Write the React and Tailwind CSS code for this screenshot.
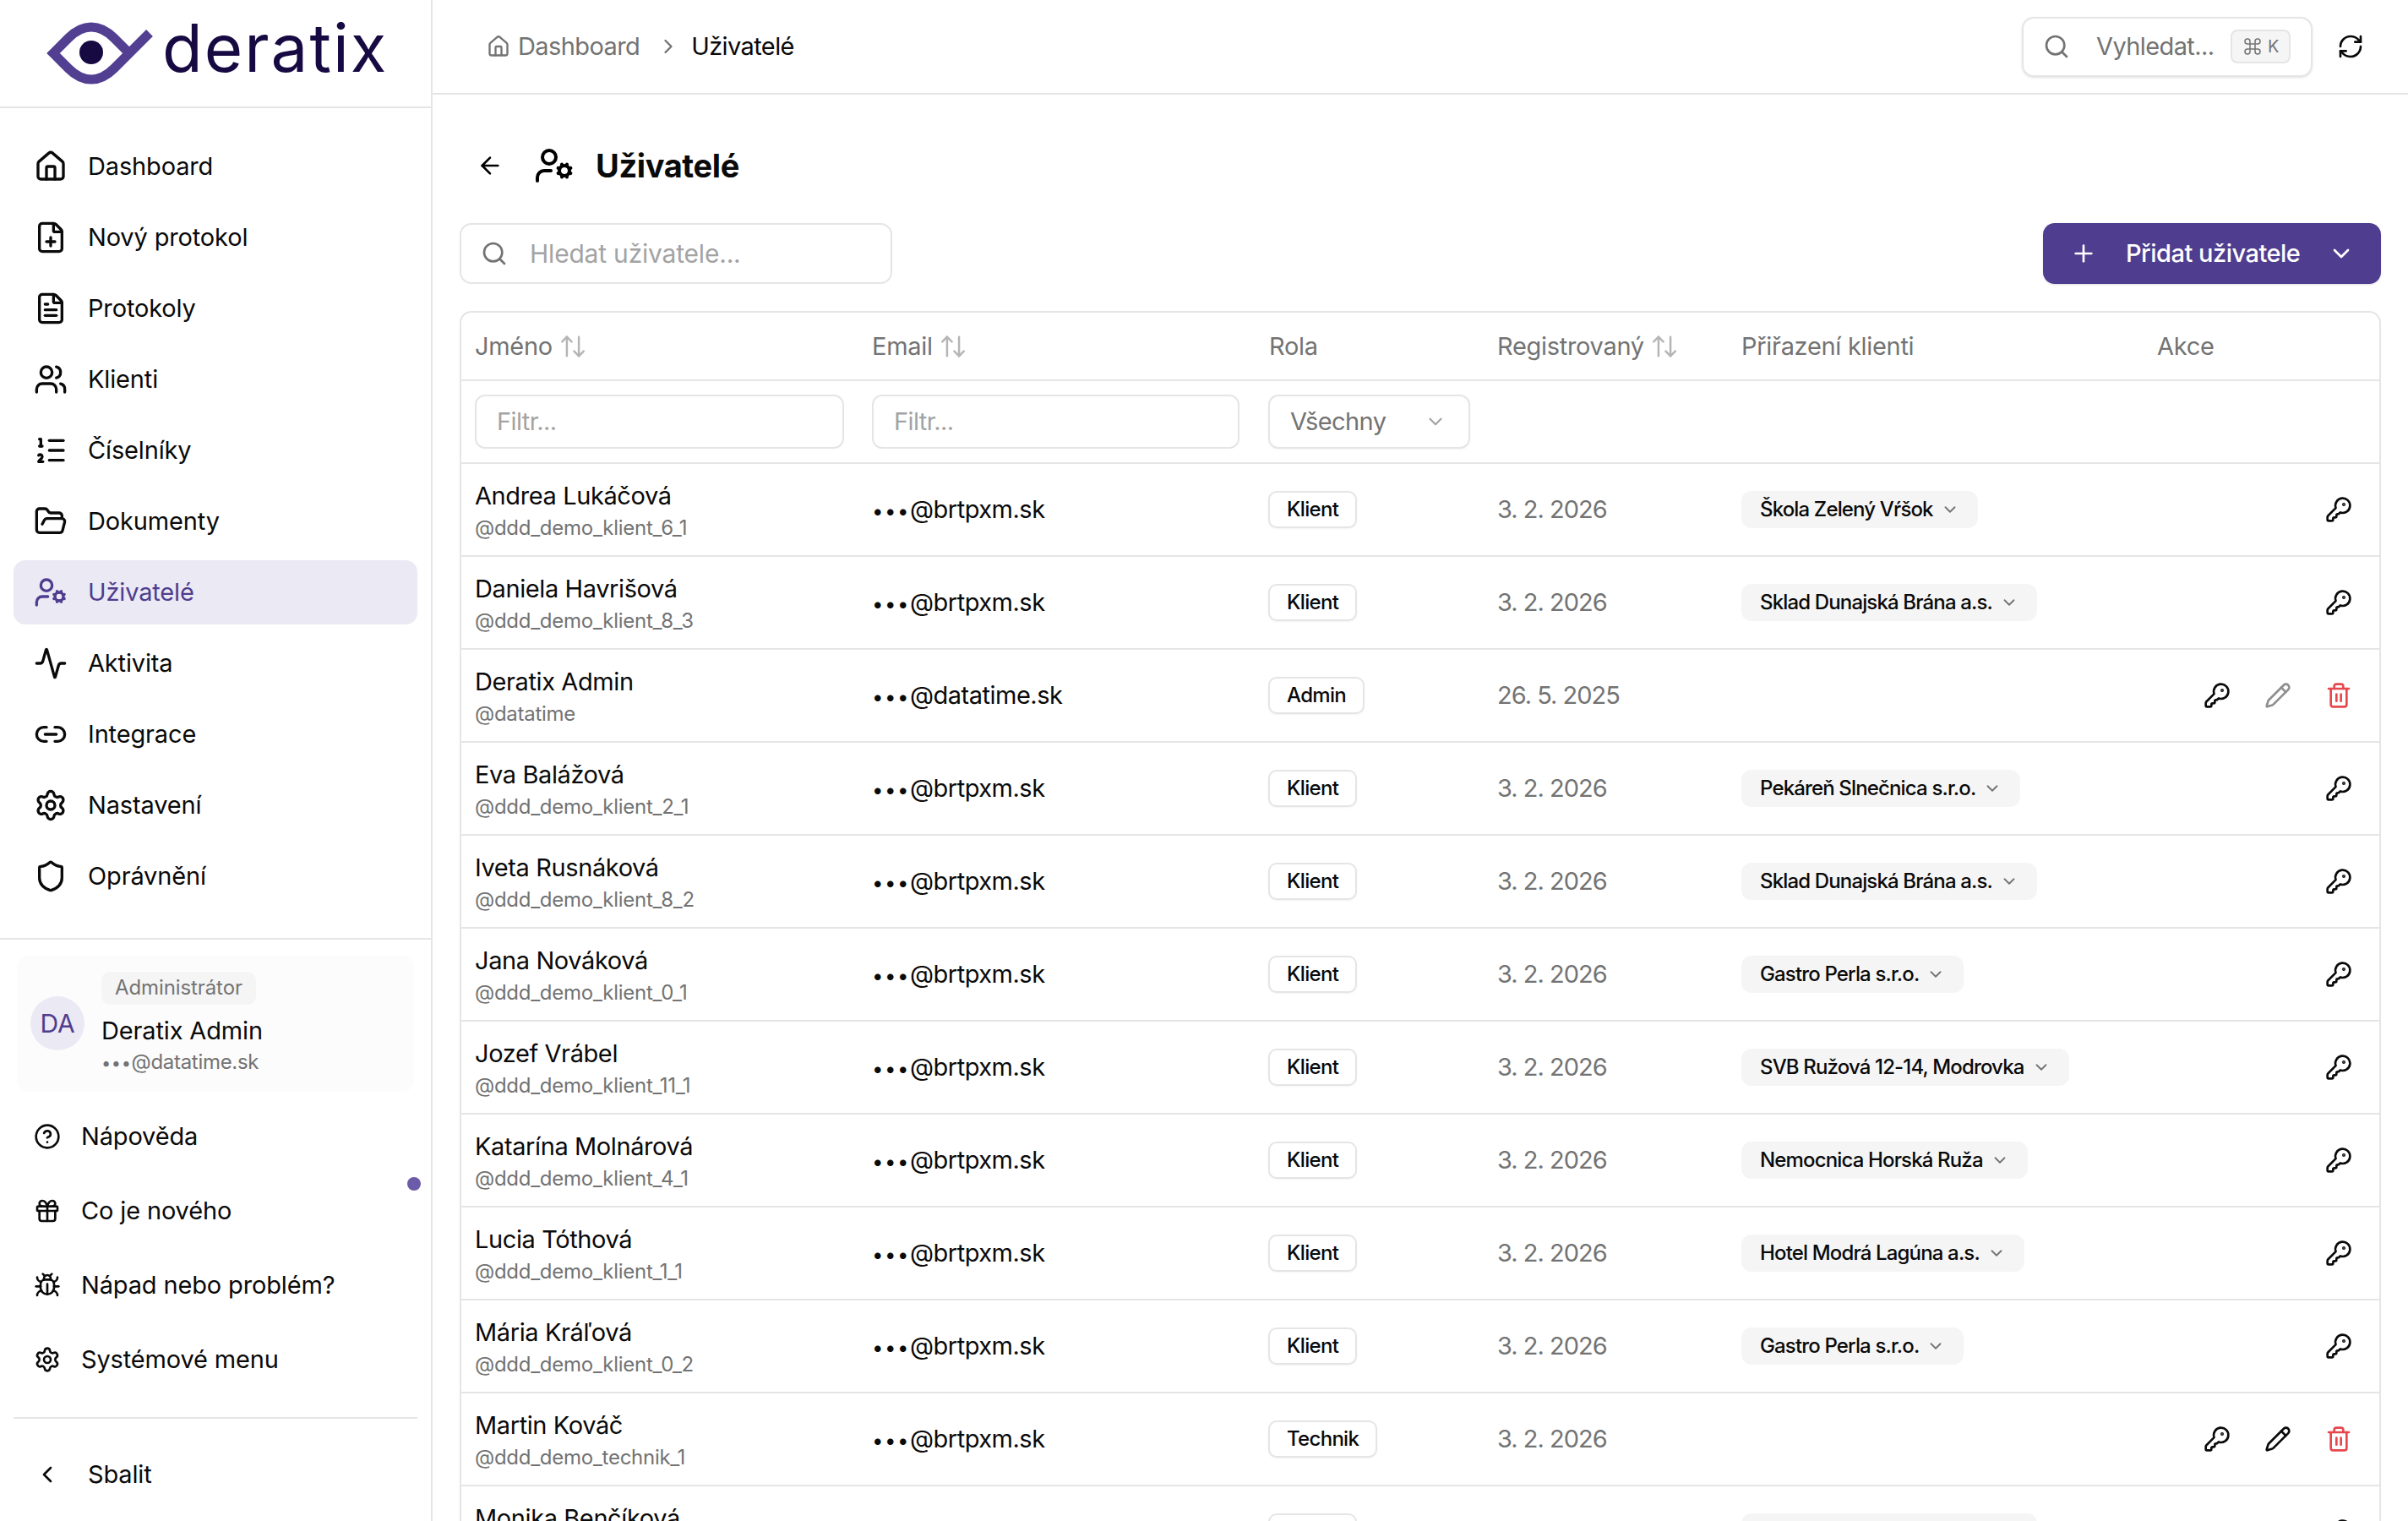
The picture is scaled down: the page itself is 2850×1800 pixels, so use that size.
import React from "react";
import {
  House, FilePlus, FileText, Users, ListOrdered, FolderOpen, UserCog, Activity, Link2, Settings, Shield,
  CircleHelp, Gift, Bug, ChevronLeft, ChevronRight, ChevronDown, Search, RefreshCw, Command, ArrowLeft,
  ArrowUpDown, KeyRound, Pencil, Trash2, Plus,
} from "lucide-react";

const nav = [
  [House, "Dashboard"], [FilePlus, "Nový protokol"], [FileText, "Protokoly"], [Users, "Klienti"],
  [ListOrdered, "Číselníky"], [FolderOpen, "Dokumenty"], [UserCog, "Uživatelé", true], [Activity, "Aktivita"],
  [Link2, "Integrace"], [Settings, "Nastavení"], [Shield, "Oprávnění"],
];
const bottom = [[CircleHelp, "Nápověda"], [Gift, "Co je nového", false, true], [Bug, "Nápad nebo problém?"], [Settings, "Systémové menu"]];

const rows = [
  ["Andrea Lukáčová", "@ddd_demo_klient_6_1", "brtpxm.sk", "Klient", "3. 2. 2026", "Škola Zelený Vŕšok"],
  ["Daniela Havrišová", "@ddd_demo_klient_8_3", "brtpxm.sk", "Klient", "3. 2. 2026", "Sklad Dunajská Brána a.s."],
  ["Deratix Admin", "@datatime", "datatime.sk", "Admin", "26. 5. 2025", null, "disabled"],
  ["Eva Balážová", "@ddd_demo_klient_2_1", "brtpxm.sk", "Klient", "3. 2. 2026", "Pekáreň Slnečnica s.r.o."],
  ["Iveta Rusnáková", "@ddd_demo_klient_8_2", "brtpxm.sk", "Klient", "3. 2. 2026", "Sklad Dunajská Brána a.s."],
  ["Jana Nováková", "@ddd_demo_klient_0_1", "brtpxm.sk", "Klient", "3. 2. 2026", "Gastro Perla s.r.o."],
  ["Jozef Vrábel", "@ddd_demo_klient_11_1", "brtpxm.sk", "Klient", "3. 2. 2026", "SVB Ružová 12-14, Modrovka"],
  ["Katarína Molnárová", "@ddd_demo_klient_4_1", "brtpxm.sk", "Klient", "3. 2. 2026", "Nemocnica Horská Ruža"],
  ["Lucia Tóthová", "@ddd_demo_klient_1_1", "brtpxm.sk", "Klient", "3. 2. 2026", "Hotel Modrá Lagúna a.s."],
  ["Mária Kráľová", "@ddd_demo_klient_0_2", "brtpxm.sk", "Klient", "3. 2. 2026", "Gastro Perla s.r.o."],
  ["Martin Kováč", "@ddd_demo_technik_1", "brtpxm.sk", "Technik", "3. 2. 2026", null, "enabled"],
  ["Monika Benčíková", "@ddd_demo_klient_8_1", "brtpxm.sk", "Klient", "3. 2. 2026", "Sklad Dunajská Brána a.s."],
];

const grid = "grid grid-cols-[470px_470px_270px_289px_492px_278px] items-center";

function Logo() {
  return (
    <div className="h-[128px] border-b-2 border-[#e5e5e5] flex items-center pl-[54px] shrink-0">
      <svg width="130" height="80" viewBox="54 23 130 80" className="shrink-0">
        <path d="M177 39 L135 81 Q122 94 108 94 Q94 94 81 81 L63 63 L81 45 Q94 32 108 32 Q122 32 135 45 L152 62" fill="none" stroke="#523f92" strokeWidth="11" strokeLinejoin="miter" />
        <circle cx="108" cy="62" r="14" fill="#170a42" />
      </svg>
      <span className="ml-[8px] text-[78px] leading-none text-[#170a42] tracking-[2px] -mt-[12px]">deratix</span>
    </div>
  );
}

function Sidebar() {
  return (
    <aside className="w-[512px] shrink-0 border-r-2 border-[#e5e5e5] flex flex-col h-full tracking-[-0.15px]">
      <Logo />
      <nav className="flex flex-col gap-2 px-4 pt-[31px] pb-[35px]">
        {nav.map(([Icon, label, active]) => (
          <div key={label} className={`h-[76px] rounded-[14px] flex items-center gap-6 pl-6 text-[29px] ${active ? "bg-[#ebe9f4] text-[#4f3d8f]" : "text-[#0a0a0a]"}`}>
            <Icon size={40} strokeWidth={2} className="shrink-0" />
            <span>{label}</span>
          </div>
        ))}
      </nav>
      <div className="border-t-2 border-[#e5e5e5] pt-[19px] flex flex-col">
        <div className="mx-5 h-[161px] rounded-[14px] bg-[#fcfcfc] flex items-center pl-4 gap-5">
          <div className="w-16 h-16 rounded-full bg-[#ebe9f4] text-[#4f3d8f] text-[30px] flex items-center justify-center -mt-[1px]">DA</div>
          <div className="flex flex-col items-start">
            <span className="h-[39px] px-4 rounded-[10px] bg-[#f5f5f5] text-[#737373] text-[24px] tracking-[-0.1px] flex items-center">Administrátor</span>
            <span className="text-[29px] leading-[42px] text-[#0a0a0a] mt-[10px]">Deratix Admin</span>
            <span className="text-[24px] leading-[32px] tracking-[-0.3px] text-[#737373]"><span className="text-[20px] tracking-[0.6px]">•••</span>@datatime.sk</span>
          </div>
        </div>
        <div className="mt-[13px] flex flex-col gap-2 px-4">
          {bottom.map(([Icon, label, , dot]) => (
            <div key={label} className="relative h-20 flex items-center gap-6 pl-6 text-[29px] text-[#0a0a0a]">
              <Icon size={32} strokeWidth={2} className="shrink-0" />
              <span>{label}</span>
              {dot && <span className="absolute right-[-4px] top-0 w-4 h-4 rounded-full bg-[#6b5ba8]" />}
            </div>
          ))}
        </div>
        <div className="mx-4 mt-[28px] border-t-2 border-[#e5e5e5]" />
        <div className="mt-[28px] px-4">
          <div className="h-[76px] flex items-center pl-6 text-[29px] text-[#0a0a0a]">
            <ChevronLeft size={32} strokeWidth={2} className="shrink-0" />
            <span className="ml-8">Sbalit</span>
          </div>
        </div>
      </div>
    </aside>
  );
}

function TopBar() {
  return (
    <header className="h-[112px] shrink-0 border-b-2 border-[#e5e5e5] flex items-center pl-[64px] pr-[52px]">
      <House size={28} strokeWidth={2} className="text-[#737373]" />
      <span className="ml-[9px] text-[29px] text-[#737373]">Dashboard</span>
      <ChevronRight size={28} strokeWidth={2} className="ml-[20px] text-[#737373]" />
      <span className="ml-[13px] text-[29px] text-[#0a0a0a]">Uživatelé</span>
      <div className="ml-auto w-[344px] h-[71px] rounded-[14px] border-2 border-[#e5e5e5] shadow-sm flex items-center pl-[23px] text-[#737373]">
        <Search size={32} strokeWidth={2} className="shrink-0" />
        <span className="ml-[31px] text-[29px]">Vyhledat...</span>
        <span className="ml-auto mr-6 w-[71px] h-10 rounded-[8px] border-2 border-[#e5e5e5] bg-[#f5f5f5] flex items-center justify-center gap-[6px] text-[20px] text-[#737373]">
          <Command size={24} strokeWidth={1.5} />K
        </span>
      </div>
      <RefreshCw size={32} strokeWidth={2} className="ml-[29px] text-[#0a0a0a]" />
    </header>
  );
}

function Role({ children }) {
  return <span className="inline-flex items-center h-[44px] px-[20px] -ml-[1px] rounded-[10px] border-2 border-[#e5e5e5] bg-white text-[24px] tracking-[-0.7px] font-medium text-[#0a0a0a] shadow-xs">{children}</span>;
}

function Client({ children }) {
  return (
    <span className="inline-flex items-center h-[44px] pl-[22px] pr-[22px] rounded-[12px] bg-[#f5f5f5] text-[24px] tracking-[-0.85px] font-medium text-[#0a0a0a]">
      {children}
      <ChevronDown size={22} strokeWidth={2} className="ml-[9px] text-[#737373]" />
    </span>
  );
}

function Actions({ mode }) {
  return (
    <div className="flex items-center justify-end gap-10 pr-[31px]">
      <KeyRound size={32} strokeWidth={2} className="text-[#0a0a0a]" />
      {mode && <Pencil size={32} strokeWidth={2} className={mode === "disabled" ? "text-[#8f8f8f]" : "text-[#0a0a0a]"} />}
      {mode && <Trash2 size={32} strokeWidth={2} className="text-[#e5484d]" />}
    </div>
  );
}

function Head({ children, sort }) {
  return (
    <div className="flex items-center gap-[7px] pl-4 text-[29px] tracking-[-0.3px] text-[#737373]">
      <span>{children}</span>
      {sort && <ArrowUpDown size={34} strokeWidth={1.75} className="text-[#b5b5b5]" />}
    </div>
  );
}

function Filter({ w }) {
  return <div className={`ml-4 h-[64px] ${w} rounded-[12px] border-2 border-[#e5e5e5] flex items-center pl-[24px] text-[29px] text-[#a3a3a3]`}>Filtr...</div>;
}

function Table() {
  return (
    <div className="mt-[32px] w-[2274px] rounded-t-[14px] border-2 border-b-0 border-[#e5e5e5] text-[#0a0a0a]">
      <div className={`${grid} h-[81px] border-b-2 border-[#e5e5e5]`}>
        <Head sort>Jméno</Head>
        <Head sort>Email</Head>
        <Head>Rola</Head>
        <Head sort>Registrovaný</Head>
        <Head>Přiřazení klienti</Head>
        <Head>Akce</Head>
      </div>
      <div className={`${grid} h-[98px] border-b-2 border-[#e5e5e5]`}>
        <Filter w="w-[437px]" />
        <Filter w="w-[435px]" />
        <div className="ml-[15px] w-[239px] h-[64px] rounded-[12px] border-2 border-[#e5e5e5] shadow-xs flex items-center justify-between pl-[24px] pr-[26px] text-[29px] text-[#737373]">
          Všechny
          <ChevronDown size={26} strokeWidth={2} className="text-[#a3a3a3]" />
        </div>
      </div>
      {rows.map(([name, handle, domain, role, date, client, mode]) => (
        <div key={name} className={`${grid} h-[110px] border-b-2 border-[#e5e5e5]`}>
          <div className="pl-4 pt-[3px] flex flex-col">
            <span className="text-[29px] tracking-[-0.4px] leading-[38px]">{name}</span>
            <span className="text-[24px] tracking-[-0.27px] leading-[32px] text-[#737373] mt-[3px]">{handle}</span>
          </div>
          <div className="pl-4 text-[29px] tracking-[-0.5px]"><span className="text-[24px] tracking-[1.5px]">•••</span>@{domain}</div>
          <div className="pl-4"><Role>{role}</Role></div>
          <div className="pl-4 text-[29px] tracking-[-1px] text-[#737373]">{date}</div>
          <div className="pl-4">{client && <Client>{client}</Client>}</div>
          <Actions mode={mode} />
        </div>
      ))}
    </div>
  );
}

export default function App() {
  return (
    <div className="w-[2850px] h-[1800px] overflow-hidden flex bg-white tracking-[-0.6px] font-['Inter',sans-serif]">
      <Sidebar />
      <main className="flex-1 min-w-0 flex flex-col">
        <TopBar />
        <div className="pl-8 pr-8 pt-[44px]">
          <div className="flex items-center h-[80px]">
            <ArrowLeft size={32} strokeWidth={2} className="ml-5" />
            <UserCog size={48} strokeWidth={2} className="ml-9" />
            <h1 className="ml-[25px] text-[38px] tracking-[-0.4px] font-bold text-[#0a0a0a]">Uživatelé</h1>
          </div>
          <div className="mt-[28px] flex items-center justify-between">
            <div className="w-[512px] h-[72px] rounded-[14px] border-2 border-[#e5e5e5] flex items-center pl-[23px] text-[#737373]">
              <Search size={32} strokeWidth={2} className="shrink-0" />
              <span className="ml-[26px] text-[30px] tracking-[-0.2px] text-[#a3a3a3]">Hledat uživatele...</span>
            </div>
            <button className="w-[400px] h-[72px] rounded-[14px] bg-[#4f3d8f] text-white flex items-center pl-[32px] text-[29px] tracking-[-0.5px] font-medium shadow-sm">
              <Plus size={32} strokeWidth={2} className="shrink-0" />
              <span className="ml-[34px]">Přidat uživatele</span>
              <ChevronDown size={32} strokeWidth={2} className="ml-auto mr-[31px]" />
            </button>
          </div>
          <Table />
        </div>
      </main>
    </div>
  );
}
